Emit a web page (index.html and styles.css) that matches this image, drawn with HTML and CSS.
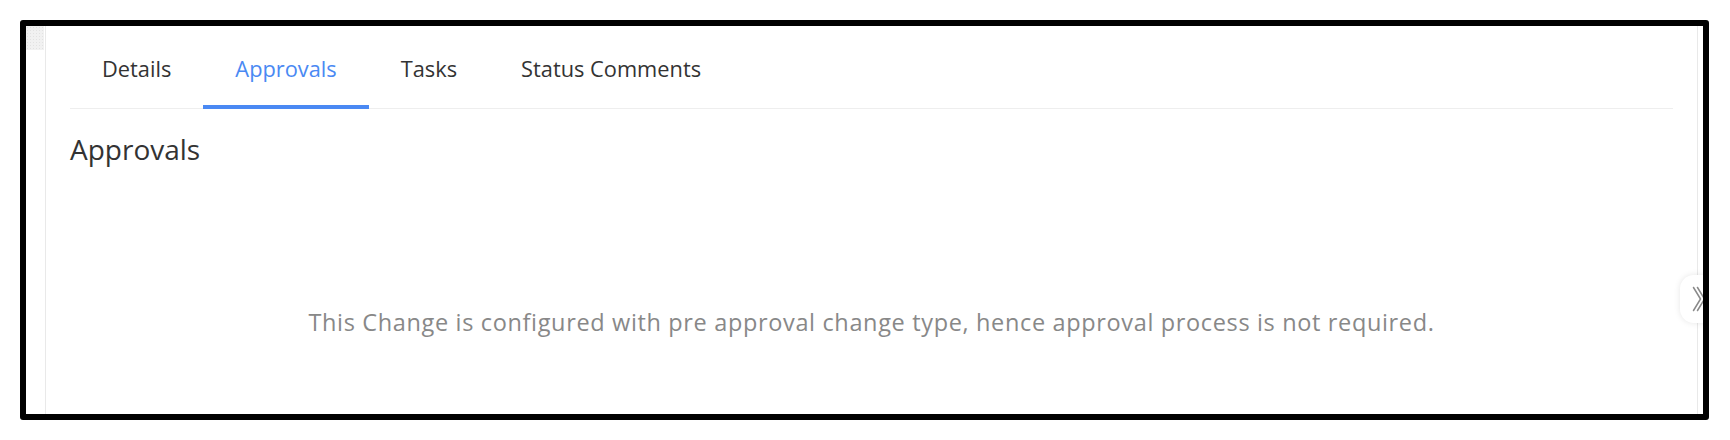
FILE: index.html
```html
<!DOCTYPE html>
<html lang="en">
<head>
<meta charset="utf-8">
<title>Approvals</title>
<link rel="stylesheet" href="styles.css">
</head>
<body>
<div class="frame">
  <div class="rail"><div class="rail-block"></div></div>
  <div class="main">
    <nav class="tabbar">
      <div class="tab">Details</div>
      <div class="tab active">Approvals</div>
      <div class="tab">Tasks</div>
      <div class="tab">Status Comments</div>
    </nav>
    <h2 class="heading">Approvals</h2>
    <p class="message">This Change is configured with pre approval change type, hence approval process is not required.</p>
  </div>
  <div class="gutter"></div>
  <button class="collapse" aria-label="Expand">
    <svg width="16" height="26" viewBox="0 0 16 26" fill="none" stroke="#8a8a8a" stroke-width="1.5" stroke-linecap="round" stroke-linejoin="round">
      <polyline points="1.5,1.5 8.5,13 1.5,24.5"/>
      <polyline points="5.5,1.5 12.5,13 5.5,24.5"/>
    </svg>
  </button>
</div>
</body>
</html>
```

FILE: styles.css
```css
html, body {
  margin: 0;
  padding: 0;
  background: #ffffff;
}

body {
  font-family: "Open Sans", "Liberation Sans", sans-serif;
}

.frame {
  position: relative;
  box-sizing: border-box;
  width: 1689px;
  height: 400px;
  margin: 20px;
  border: 6px solid #000000;
  border-radius: 3px;
  display: flex;
  overflow: hidden;
  background: #ffffff;
}

.rail {
  flex: none;
  width: 19px;
}

.rail-block {
  width: 18px;
  height: 24px;
  background-color: #f1f1f1;
  background-image: radial-gradient(circle, #e2e2e2 0.8px, transparent 1px);
  background-size: 3px 3px;
}

.main {
  flex: 1;
  min-width: 0;
  border-left: 1px solid #e9e9e9;
  border-right: 1px solid #e9e9e9;
  padding: 0 24px;
}

.gutter {
  flex: none;
  width: 5px;
}

.tabbar {
  display: flex;
  padding-top: 29px;
  border-bottom: 1px solid #eeeeee;
}

.tab {
  font-size: 21.8px;
  line-height: 28px;
  color: #333333;
  padding: 0 32px 22px;
  border-bottom: 4px solid transparent;
  margin-bottom: -1px;
}

.tab.active {
  color: #4a89f3;
  border-bottom-color: #4a89f3;
}

.heading {
  margin: 22px 0 0;
  font-size: 28px;
  line-height: 36px;
  font-weight: 400;
  color: #333333;
}

.message {
  margin: 141px 0 0;
  text-align: center;
  font-size: 23.5px;
  letter-spacing: 0.65px;
  line-height: 28px;
  color: #888888;
}

.collapse {
  position: absolute;
  left: 1654px;
  top: 249px;
  width: 40px;
  height: 48px;
  padding: 0 0 0 12px;
  border: none;
  border-radius: 14px;
  background: #ffffff;
  box-shadow: 0 0 6px rgba(0, 0, 0, 0.1);
  display: flex;
  align-items: center;
  cursor: pointer;
}
```
